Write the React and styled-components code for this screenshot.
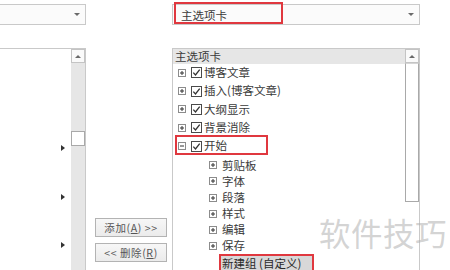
import styled, { createGlobalStyle } from 'styled-components';

const GlobalStyle = createGlobalStyle`
    body {
        margin: 0;
        background: #fff;
        font-family: "Noto Sans CJK SC", "Noto Sans", sans-serif;
        color: #3a3a3a;
    }
`;

const Page = styled.div`
    position: relative;
    width: 450px;
    height: 270px;
    padding-top: 4px;
    box-sizing: border-box;
    display: flex;
    overflow: hidden;
    background: #fff;
`;

const Column = styled.div`
    width: ${p => p.$width}px;
    margin-left: ${p => p.$offset || 0}px;
    display: flex;
    flex-direction: column;
    gap: 23px;
    flex-shrink: 0;
`;

const Combo = styled.div`
    position: relative;
    height: 21px;
    box-sizing: border-box;
    border: 1px solid #c9c9c9;
    background: #fbfbfb;
    display: flex;
    align-items: center;
    justify-content: space-between;
    padding: 0 5px 0 8px;
    font-size: 11.5px;
`;

const ComboArrow = styled.span`
    width: 0;
    height: 0;
    border-left: 3px solid transparent;
    border-right: 3px solid transparent;
    border-top: 3px solid #6a6a6a;
    margin-left: auto;
`;

const RedFrame = styled.span`
    position: absolute;
    left: 1px;
    top: -3px;
    width: 109px;
    height: 22px;
    box-sizing: border-box;
    border: 2px solid #e0383f;
`;

const ListBox = styled.div`
    flex: 1;
    display: flex;
    border: 1px solid #c9c9c9;
    border-bottom: none;
    background: #fff;
    min-height: 0;
`;

const ListContent = styled.div`
    flex: 1;
    display: flex;
    flex-direction: column;
    min-width: 0;
`;

const Scrollbar = styled.div`
    width: 14px;
    display: flex;
    flex-direction: column;
    background: ${p => p.$track};
`;

const ScrollUp = styled.div`
    height: 14px;
    box-sizing: border-box;
    border: 1px solid #c4c4c4;
    background: #fafafa;
    display: flex;
    align-items: center;
    justify-content: center;

    &::before {
        content: '';
        border-left: 3px solid transparent;
        border-right: 3px solid transparent;
        border-bottom: 3px solid #6a6a6a;
    }
`;

const Thumb = styled.div`
    margin-top: ${p => p.$top}px;
    height: ${p => p.$height}px;
    box-sizing: border-box;
    border: 1px solid #a9a9a9;
    border-top-color: ${p => (p.$top ? '#a9a9a9' : '#d6d6d6')};
    background: #fff;
`;

const LeftRows = styled.div`
    display: flex;
    flex-direction: column;
    gap: 32.5px;
    padding: 91px 6px 0 0;
`;

const LeftRow = styled.div`
    height: 16px;
    display: flex;
    align-items: center;
    justify-content: flex-end;

    &::after {
        content: '';
        border-top: 3.5px solid transparent;
        border-bottom: 3.5px solid transparent;
        border-left: 4px solid #333;
    }
`;

const ButtonStack = styled.div`
    width: 86px;
    flex-shrink: 0;
    display: flex;
    flex-direction: column;
    justify-content: flex-end;
    gap: 6px;
    padding: 0 0 8px 9px;
    box-sizing: border-box;
`;

const MoveButton = styled.button`
    width: 72px;
    height: 19px;
    padding: 0;
    border: 1px solid #b3b3b3;
    background: linear-gradient(#f7f7f7, #ebebeb);
    font-family: "Noto Sans CJK SC", sans-serif;
    font-size: 10.5px;
    color: #555;
    letter-spacing: 0.6px;
    white-space: pre;
`;

const HeaderRow = styled.div`
    height: 14.5px;
    background: #e6e6e6;
    padding-left: 2px;
    font-size: 11.5px;
    line-height: 14.5px;
`;

const TreeRow = styled.div`
    position: relative;
    display: flex;
    align-items: center;
    height: ${p => (p.$child ? 16.2 : 18.5)}px;
    padding-left: ${p => (p.$child ? 36 : 5)}px;
    margin-top: ${p => p.$gap || 0}px;
    font-size: 11.5px;
    white-space: nowrap;

    ${p => p.$marked && `
        &::after {
            content: '';
            position: absolute;
            left: 2px;
            top: -2px;
            width: 93px;
            height: 20px;
            box-sizing: border-box;
            border: 2px solid #e0383f;
        }
    `}
`;

const Label = styled.span`
    margin-left: ${p => p.$gap}px;
    line-height: 1;
`;

const SelectedLabel = styled.span`
    margin-left: 10px;
    align-self: stretch;
    width: 95px;
    box-sizing: border-box;
    border: 2px solid #e0383f;
    border-bottom: none;
    background: #d8d8d8;
    padding-left: 1px;
    display: flex;
    align-items: center;
    color: #2a2a2a;
`;

const Watermark = styled.div`
    position: absolute;
    left: 319px;
    top: 217px;
    font-size: 31.5px;
    line-height: 1;
    color: rgba(175, 175, 175, 0.55);
    letter-spacing: 0.5px;
`;

const Expander = ({open}) => (
    <svg width="8" height="8" viewBox="0 0 8 8">
        <rect x="0.5" y="0.5" width="7" height="7" fill="#fff" stroke="#8c8c8c" />
        <line x1="2" y1="4" x2="6" y2="4" stroke="#333" />
        {!open && <line x1="4" y1="2" x2="4" y2="6" stroke="#333" />}
    </svg>
);

const CheckBox = () => (
    <svg width="11" height="11" viewBox="0 0 11 11" style={{marginLeft: 5}}>
        <rect x="0.5" y="0.5" width="10" height="10" fill="#fff" stroke="#4a4a4a" />
        <path d="M2.3 5.6 L4.5 8 L8.7 2.6" fill="none" stroke="#333" strokeWidth="1.3" />
    </svg>
);

const tabs = [
    {label: '博客文章'},
    {label: '插入(博客文章)'},
    {label: '大纲显示'},
    {label: '背景消除'},
    {label: '开始', open: true, marked: true},
];

const groups = ['剪贴板', '字体', '段落', '样式', '编辑', '保存'];

const App = () => (
    <>
        <GlobalStyle />
        <Page>
            <Column $width={88} $offset={-2}>
                <Combo>
                    <ComboArrow />
                </Combo>
                <ListBox>
                    <ListContent>
                        <LeftRows>
                            <LeftRow />
                            <LeftRow />
                            <LeftRow />
                        </LeftRows>
                    </ListContent>
                    <Scrollbar $track="#e6e6e6">
                        <ScrollUp />
                        <Thumb $top={68} $height={15} />
                    </Scrollbar>
                </ListBox>
            </Column>

            <ButtonStack>
                <MoveButton>添加(<u>A</u>) &gt;&gt;</MoveButton>
                <MoveButton>&lt;&lt; 删除(<u>R</u>)</MoveButton>
            </ButtonStack>

            <Column $width={248}>
                <Combo>
                    主选项卡
                    <ComboArrow />
                    <RedFrame />
                </Combo>
                <ListBox>
                    <ListContent>
                        <HeaderRow>主选项卡</HeaderRow>
                        {tabs.map(t => (
                            <TreeRow key={t.label} $marked={t.marked}>
                                <Expander open={t.open} />
                                <CheckBox />
                                <Label $gap={2}>{t.label}</Label>
                            </TreeRow>
                        ))}
                        {groups.map((g, i) => (
                            <TreeRow key={g} $child $gap={i === 0 ? 2 : 0}>
                                <Expander />
                                <Label $gap={5}>{g}</Label>
                            </TreeRow>
                        ))}
                        <TreeRow $child>
                            <SelectedLabel>新建组 (自定义)</SelectedLabel>
                        </TreeRow>
                    </ListContent>
                    <Scrollbar $track="#fff">
                        <ScrollUp />
                        <Thumb $top={0} $height={139} />
                    </Scrollbar>
                </ListBox>
            </Column>

            <Watermark>软件技巧</Watermark>
        </Page>
    </>
);

export default App;
